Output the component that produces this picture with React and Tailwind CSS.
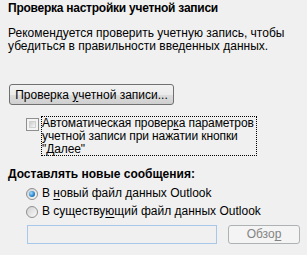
export default function App() {
  return (
    <div
      className="w-[307px] h-[255px] bg-[#f0f0f0] text-black text-[12px] leading-[13px] pl-[8px] pt-[2px] overflow-hidden whitespace-nowrap"
      style={{ fontFamily: '"Liberation Sans", Arial, sans-serif' }}
    >
      <h1 className="font-bold leading-[13px] tracking-[-0.25px]">Проверка настройки учетной записи</h1>
      <p className="mt-[12px] leading-[13px]">
        Рекомендуется проверить учетную запись, чтобы
        <br />
        убедиться в правильности введенных данных.
      </p>

      <button className="mt-[31px] ml-[1px] w-[165px] h-[21px] rounded-[3px] border border-[#707070] bg-[linear-gradient(#f2f2f2_0%,#ebebeb_50%,#dddddd_51%,#cfcfcf_100%)] flex items-center justify-center text-[12px] leading-none">
        Проверка&nbsp;<span className="underline underline-offset-2">у</span>четной записи...
      </button>

      <div className="mt-[11px] ml-[18px] flex items-start gap-[2px]">
        <span className="mt-[2px] w-[13px] h-[13px] border border-[#8e8f8f] bg-[#f4f4f4] p-[2px] shrink-0">
          <span className="block w-full h-full border border-[#d0d0d0] bg-[linear-gradient(135deg,#cbcbcb,#f7f7f7)]" />
        </span>
        <span className="w-[216px] h-[40px] border border-dotted border-black leading-[13px] tracking-[-0.1px]">
          Автоматическая провер<span className="underline underline-offset-2">к</span>а параметров
          <br />
          учетной записи при нажатии кнопки
          <br />
          "Далее"
        </span>
      </div>

      <h2 className="mt-[12px] font-bold leading-[13px]">Доставлять новые сообщения:</h2>

      <div className="mt-[6px] ml-[18px] flex flex-col gap-[5px]">
        <label className="flex items-center gap-[4px] h-[13px]">
          <span className="w-[12px] h-[12px] rounded-full border border-[#8e8f8f] bg-[linear-gradient(135deg,#d0d0d0,#fafafa)] flex items-center justify-center shrink-0">
            <span className="w-[6px] h-[6px] rounded-full bg-[radial-gradient(circle_at_35%_35%,#9fdcff,#2e8ad0_55%,#0f4c86)]" />
          </span>
          <span>
            В <span className="underline underline-offset-2">н</span>овый файл данных Outlook
          </span>
        </label>
        <label className="flex items-center gap-[4px] h-[13px]">
          <span className="w-[12px] h-[12px] rounded-full border border-[#8e8f8f] bg-[linear-gradient(135deg,#d0d0d0,#fafafa)] shrink-0" />
          <span>
            В существу<span className="underline underline-offset-2">ю</span>щий файл данных Outlook
          </span>
        </label>
      </div>

      <div className="mt-[7px] ml-[19px] flex items-center gap-[11px]">
        <div className="w-[190px] h-[19px] border border-[#a9c7e8] bg-[#f0f0f0]" />
        <div className="w-[72px] h-[19px] rounded-[3px] border border-[#adb2b5] bg-[#f4f4f4] flex items-center justify-center text-[#838383]">
          Обзо<span className="underline underline-offset-2">р</span>
        </div>
      </div>
    </div>
  );
}
